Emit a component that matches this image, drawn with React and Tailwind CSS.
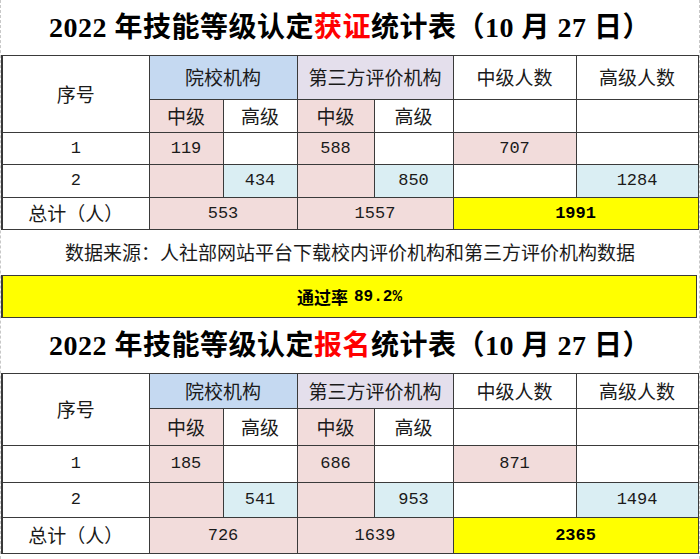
const cjk = "font-['Noto_Sans_CJK_SC',sans-serif]";
const mono = "font-['Liberation_Mono','Noto_Sans_CJK_SC',monospace]";
const cell = "border border-[#3a3a3a] text-center align-middle p-0";

const tables = [
  {
    accent: "获证",
    rows: ["h-[44px]", "h-[33px]", "h-[32px]", "h-[33px]", "h-[32px]"],
    a1: "119", b1: "588", mid: "707",
    a2: "434", b2: "850", high: "1284",
    t1: "553", t2: "1557", total: "1991",
  },
  {
    accent: "报名",
    rows: ["h-[35px]", "h-[37px]", "h-[37px]", "h-[35px]", "h-[36px]"],
    a1: "185", b1: "686", mid: "871",
    a2: "541", b2: "953", high: "1494",
    t1: "726", t2: "1639", total: "2365",
  },
];

const Title = ({ accent }) => (
  <div className="h-[55px] flex items-center justify-center text-[28px] font-bold text-black font-['Liberation_Serif','Noto_Sans_CJK_SC',serif] tracking-[0.5px]">
    <span>2022 年技能等级认定</span>
    <span className="text-[#ff0000]">{accent}</span>
    <span>统计表（10 月 27 日）</span>
  </div>
);

const StatTable = ({ d }) => (
  <table className="table-fixed border-collapse w-[696px] text-[#1a1a1a]">
    <colgroup>
      <col className="w-[147px]" />
      <col className="w-[74px]" />
      <col className="w-[74px]" />
      <col className="w-[77px]" />
      <col className="w-[79px]" />
      <col className="w-[123px]" />
      <col className="w-[122px]" />
    </colgroup>
    <tbody className={`text-[19px] ${cjk}`}>
      <tr className={d.rows[0]}>
        <td rowSpan={2} className={`${cell} border-l-2 bg-white`}>序号</td>
        <td colSpan={2} className={`${cell} bg-[#c5d9f1]`}>院校机构</td>
        <td colSpan={2} className={`${cell} bg-[#e4dfec]`}>第三方评价机构</td>
        <td className={`${cell} bg-white`}>中级人数</td>
        <td className={`${cell} bg-white`}>高级人数</td>
      </tr>
      <tr className={d.rows[1]}>
        <td className={`${cell} bg-[#f2dcdb]`}>中级</td>
        <td className={`${cell} bg-white`}>高级</td>
        <td className={`${cell} bg-[#f2dcdb]`}>中级</td>
        <td className={`${cell} bg-white`}>高级</td>
        <td className={`${cell} bg-white`}></td>
        <td className={`${cell} bg-white`}></td>
      </tr>
      <tr className={`${d.rows[2]} ${mono} text-[17px]`}>
        <td className={`${cell} border-l-2 bg-white`}>1</td>
        <td className={`${cell} bg-[#f2dcdb]`}>{d.a1}</td>
        <td className={`${cell} bg-white`}></td>
        <td className={`${cell} bg-[#f2dcdb]`}>{d.b1}</td>
        <td className={`${cell} bg-white`}></td>
        <td className={`${cell} bg-[#f2dcdb]`}>{d.mid}</td>
        <td className={`${cell} bg-white`}></td>
      </tr>
      <tr className={`${d.rows[3]} ${mono} text-[17px]`}>
        <td className={`${cell} border-l-2 bg-white`}>2</td>
        <td className={`${cell} bg-[#f2dcdb]`}></td>
        <td className={`${cell} bg-[#daeef3]`}>{d.a2}</td>
        <td className={`${cell} bg-[#f2dcdb]`}></td>
        <td className={`${cell} bg-[#daeef3]`}>{d.b2}</td>
        <td className={`${cell} bg-white`}></td>
        <td className={`${cell} bg-[#daeef3]`}>{d.high}</td>
      </tr>
      <tr className={`${d.rows[4]} ${mono} text-[17px]`}>
        <td className={`${cell} border-l-2 bg-white ${cjk} text-[19px]`}>总计（人）</td>
        <td colSpan={2} className={`${cell} bg-[#f2dcdb]`}>{d.t1}</td>
        <td colSpan={2} className={`${cell} bg-[#f2dcdb]`}>{d.t2}</td>
        <td colSpan={2} className={`${cell} bg-[#ffff00] font-bold text-black`}>{d.total}</td>
      </tr>
    </tbody>
  </table>
);

export default function App() {
  return (
    <div className="w-[700px] h-[559px] bg-white border-x border-dashed border-[#c8c8c8] overflow-hidden">
      <Title accent={tables[0].accent} />
      <StatTable d={tables[0]} />
      <div className={`h-[45px] flex items-center justify-center text-[19px] text-[#1a1a1a] ${cjk}`}>
        数据来源：人社部网站平台下载校内评价机构和第三方评价机构数据
      </div>
      <div className={`w-[696px] h-[43px] flex items-center justify-center gap-[6px] bg-[#ffff00] border border-[#3a3a3a] border-l-2 text-[17px] font-bold text-black ${cjk}`}>
        <span>通过率</span>
        <span className={`${mono} text-[16px]`}>89.2%</span>
      </div>
      <Title accent={tables[1].accent} />
      <StatTable d={tables[1]} />
    </div>
  );
}
